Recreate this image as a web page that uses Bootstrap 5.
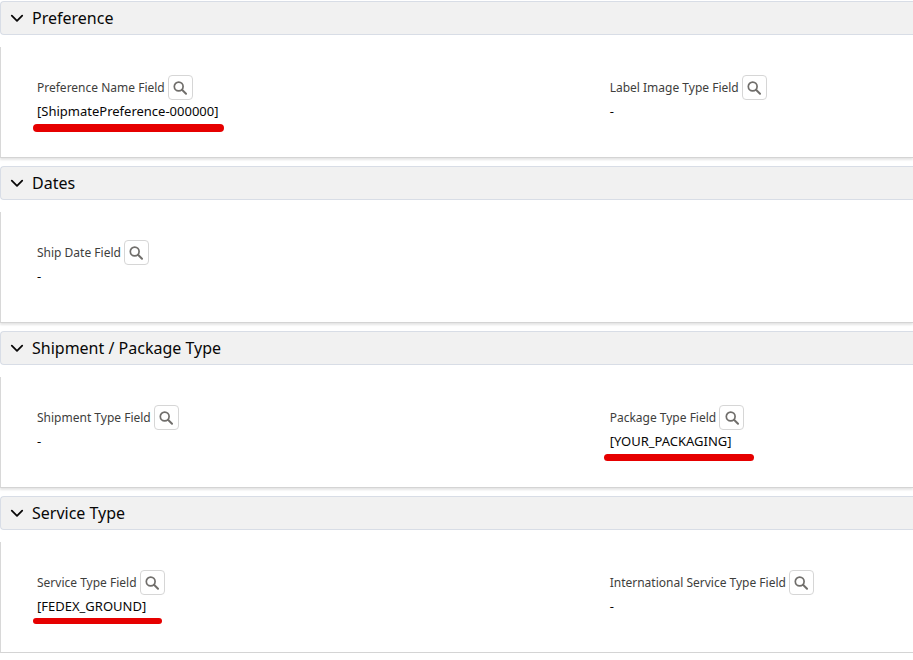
<!DOCTYPE html>
<html lang="en">
<head>
<meta charset="utf-8">
<meta name="viewport" content="width=device-width, initial-scale=1">
<title>Shipmate Preference</title>
<link href="https://cdn.jsdelivr.net/npm/bootstrap@5.3.0/dist/css/bootstrap.min.css" rel="stylesheet">
<style>
body { font-family: "Noto Sans", "Open Sans", sans-serif; color: #080707; background: #fff; }
.sections { padding-top: 1px; }
.section-toggle { height: 34px; padding: 0 9px; gap: 8px; background: #f1f1f1; border: 1px solid #d8dde6; border-right: 0; border-radius: 4px 0 0 4px; font-size: 16px; line-height: 24px; color: #080707; }
.section-toggle svg { width: 14px; height: 14px; }
.section-toggle[aria-expanded="false"] svg { transform: rotate(-90deg); }
.section-body { min-height: 111px; margin-top: 12px; padding: 28px 17px 28px 36px; border-left: 1px solid #d8d8d8; border-bottom: 1px solid #d4d4d4; box-shadow: 0 2px 2px rgba(0, 0, 0, .1); }
.field-label { gap: 3px; height: 25px; font-size: 12px; line-height: 24px; color: #3e3e3c; }
.lookup { width: 25px; height: 25px; background: #fff; border: 1px solid #d6d6d6; border-radius: 4px; color: #706e6b; }
.field-value { font-size: 13px; line-height: 20px; margin: 1px 0; }
.marker { left: -4px; top: 23px; height: 8px; width: 191px; border-radius: 4px; background: #e60000; }
.marker-wide { left: -6px; width: 150px; height: 7px; }
.marker-short { top: 22px; width: 129px; height: 6px; }
</style>
</head>
<body>
<svg class="d-none" aria-hidden="true">
  <symbol id="chevron" viewBox="0 0 14 14"><path d="M1.800 4.700 7 9.900l5.200-5.200" fill="none" stroke="currentColor" stroke-width="1.800" stroke-linecap="round" stroke-linejoin="round"/></symbol>
  <symbol id="search" viewBox="0 0 14 14"><circle cx="5.700" cy="5.500" r="4.400" fill="none" stroke="currentColor" stroke-width="1.700"/><path d="m9 8.800 4 4" fill="none" stroke="currentColor" stroke-width="2" stroke-linecap="round"/></symbol>
</svg>
<main class="sections d-flex flex-column gap-2">
  <section>
    <h2 class="m-0 d-flex"><button class="section-toggle w-100 d-flex align-items-center" type="button" data-bs-toggle="collapse" data-bs-target="#preference" aria-expanded="true" aria-controls="preference"><svg aria-hidden="true"><use href="#chevron"/></svg>Preference</button></h2>
    <div class="collapse show" id="preference"><div class="section-body"><div class="row g-0">
      <div class="col-8">
        <div class="field-label d-flex align-items-center"><span>Preference Name Field</span><button class="lookup p-0 d-flex align-items-center justify-content-center" type="button" aria-label="Look up Preference Name Field"><svg width="14" height="14"><use href="#search"/></svg></button></div>
        <div class="field-value position-relative">[ShipmatePreference-000000]<span class="marker position-absolute"></span></div>
      </div>
      <div class="col-4">
        <div class="field-label d-flex align-items-center"><span>Label Image Type Field</span><button class="lookup p-0 d-flex align-items-center justify-content-center" type="button" aria-label="Look up Label Image Type Field"><svg width="14" height="14"><use href="#search"/></svg></button></div>
        <div class="field-value">-</div>
      </div>
    </div></div></div>
  </section>
  <section>
    <h2 class="m-0 d-flex"><button class="section-toggle w-100 d-flex align-items-center" type="button" data-bs-toggle="collapse" data-bs-target="#dates" aria-expanded="true" aria-controls="dates"><svg aria-hidden="true"><use href="#chevron"/></svg>Dates</button></h2>
    <div class="collapse show" id="dates"><div class="section-body"><div class="row g-0">
      <div class="col-8">
        <div class="field-label d-flex align-items-center"><span>Ship Date Field</span><button class="lookup p-0 d-flex align-items-center justify-content-center" type="button" aria-label="Look up Ship Date Field"><svg width="14" height="14"><use href="#search"/></svg></button></div>
        <div class="field-value">-</div>
      </div>
    </div></div></div>
  </section>
  <section>
    <h2 class="m-0 d-flex"><button class="section-toggle w-100 d-flex align-items-center" type="button" data-bs-toggle="collapse" data-bs-target="#shipment" aria-expanded="true" aria-controls="shipment"><svg aria-hidden="true"><use href="#chevron"/></svg>Shipment / Package Type</button></h2>
    <div class="collapse show" id="shipment"><div class="section-body"><div class="row g-0">
      <div class="col-8">
        <div class="field-label d-flex align-items-center"><span>Shipment Type Field</span><button class="lookup p-0 d-flex align-items-center justify-content-center" type="button" aria-label="Look up Shipment Type Field"><svg width="14" height="14"><use href="#search"/></svg></button></div>
        <div class="field-value">-</div>
      </div>
      <div class="col-4">
        <div class="field-label d-flex align-items-center"><span>Package Type Field</span><button class="lookup p-0 d-flex align-items-center justify-content-center" type="button" aria-label="Look up Package Type Field"><svg width="14" height="14"><use href="#search"/></svg></button></div>
        <div class="field-value position-relative">[YOUR_PACKAGING]<span class="marker marker-wide position-absolute"></span></div>
      </div>
    </div></div></div>
  </section>
  <section>
    <h2 class="m-0 d-flex"><button class="section-toggle w-100 d-flex align-items-center" type="button" data-bs-toggle="collapse" data-bs-target="#service" aria-expanded="true" aria-controls="service"><svg aria-hidden="true"><use href="#chevron"/></svg>Service Type</button></h2>
    <div class="collapse show" id="service"><div class="section-body"><div class="row g-0">
      <div class="col-8">
        <div class="field-label d-flex align-items-center"><span>Service Type Field</span><button class="lookup p-0 d-flex align-items-center justify-content-center" type="button" aria-label="Look up Service Type Field"><svg width="14" height="14"><use href="#search"/></svg></button></div>
        <div class="field-value position-relative">[FEDEX_GROUND]<span class="marker marker-short position-absolute"></span></div>
      </div>
      <div class="col-4">
        <div class="field-label d-flex align-items-center"><span>International Service Type Field</span><button class="lookup p-0 d-flex align-items-center justify-content-center" type="button" aria-label="Look up International Service Type Field"><svg width="14" height="14"><use href="#search"/></svg></button></div>
        <div class="field-value">-</div>
      </div>
    </div></div></div>
  </section>
</main>
<script src="https://cdn.jsdelivr.net/npm/bootstrap@5.3.0/dist/js/bootstrap.bundle.min.js"></script>
</body>
</html>
